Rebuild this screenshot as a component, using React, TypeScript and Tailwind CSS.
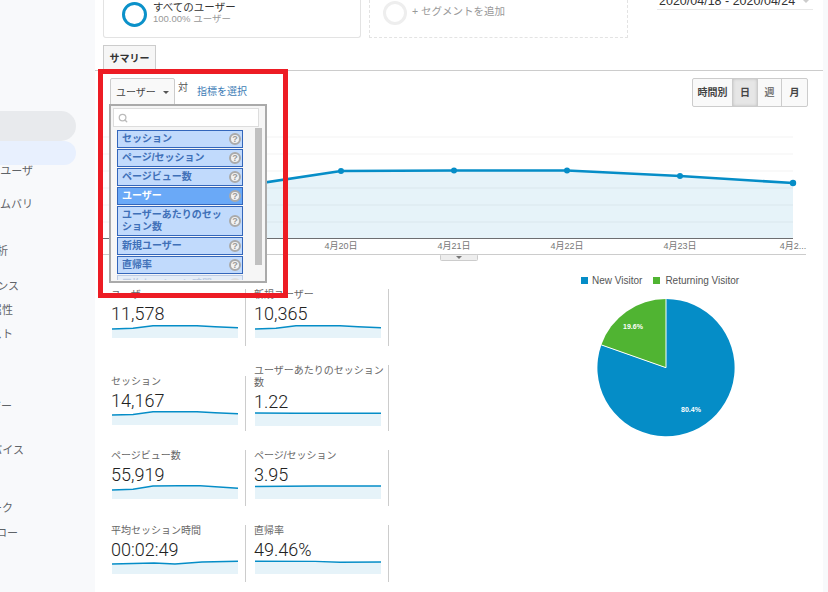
import { Search } from 'lucide-react';

const JP = "font-['Liberation_Sans','Noto_Sans_CJK_JP',sans-serif]";

const NAV = [
  { label: 'アクティブ ユーザ', cls: '-mt-px w-[33px]' },
  { label: 'ライフタイムバリ', cls: 'mt-[19px] w-[33px]' },
  { label: 'コホート分析', cls: 'mt-[33px] w-[8px]' },
  { label: 'オーディエンス', cls: 'mt-[21px] w-[19px]' },
  { label: 'ユーザー属性', cls: 'mt-[10px] w-[13px]' },
  { label: 'インタレスト', cls: 'mt-[10px] w-[13px]' },
  { label: 'テクノロジー', cls: 'mt-[58px] w-[12px]' },
  { label: 'モバイル デバイス', cls: 'mt-[30px] w-[24px]' },
  { label: 'ベンチマーク', cls: 'mt-[44px] w-[13px]' },
  { label: 'ユーザー フロー', cls: 'mt-[11px] w-[18px]' },
];

const METRIC_OPTIONS = [
  { label: 'セッション', cls: 'h-[18px]' },
  { label: 'ページ/セッション', cls: 'h-[18px]' },
  { label: 'ページビュー数', cls: 'h-[18px]' },
  { label: 'ユーザー', cls: 'h-[18px]', active: true },
  { label: 'ユーザーあたりのセッション数', cls: 'h-[30px]' },
  { label: '新規ユーザー', cls: 'h-[18px]' },
  { label: '直帰率', cls: 'h-[18px]' },
  { label: '平均セッション時間', cls: 'h-[18px] opacity-30' },
];

const METRICS = [
  { label: 'ユーザー', value: '11,578', cls: 'h-[57px]', pts: '0,5 21,4.3 41,1.7 85,1.7 103,2.7 126,3.7' },
  { label: '新規ユーザー', value: '10,365', cls: 'h-[57px]', pts: '0,5 21,4.3 41,1.7 85,1.7 103,2.7 126,3.7' },
  { label: 'セッション', value: '14,167', cls: 'h-[55px]', pts: '0,4 21,3.5 41,0.8 85,0.8 103,1.8 126,2.8' },
  { label: 'ユーザーあたりのセッション数', value: '1.22', cls: 'h-[66px]', pts: '0,1 40,1.3 126,1.2' },
  { label: 'ページビュー数', value: '55,919', cls: 'h-[56px]', pts: '0,5 21,4.3 41,1 85,0.5 126,3.3' },
  { label: 'ページ/セッション', value: '3.95', cls: 'h-[56px]', pts: '0,1.5 60,1 126,1' },
  { label: '平均セッション時間', value: '00:02:49', cls: 'h-[57px]', pts: '0,4 42,3 63,4 90,2 126,1.3' },
  { label: '直帰率', value: '49.46%', cls: 'h-[57px]', pts: '0,1.3 60,1.4 85,2.2 126,2' },
];

function Sparkline({ pts }: { pts: string }) {
  return (
    <svg width="127" height="14" viewBox="0 0 127 14" className="block ml-px">
      <polygon points={`0,14 ${pts} 126,14`} fill="#e6f3f9" />
      <polyline points={pts} fill="none" stroke="#058dc7" strokeWidth="1.4" />
    </svg>
  );
}

function MainChart() {
  const line = '115,196 228,188 341,171 454,170.5 567,170.5 680,176 793,183';
  const labels = [
    { x: 341, t: '4月20日' },
    { x: 454, t: '4月21日' },
    { x: 567, t: '4月22日' },
    { x: 680, t: '4月23日' },
    { x: 793, t: '4月2...' },
  ];
  return (
    <svg width="728" height="142" viewBox="95 120 728 142" className="block mt-[13px]">
      {[137, 154, 171, 188, 205, 222].map((y) => (
        <line key={y} x1="103" x2="793" y1={y} y2={y} stroke="#f3f3f3" />
      ))}
      <polygon points={`115,238 ${line} 793,238`} fill="#058dc7" fillOpacity="0.1" />
      <polyline points={line} fill="none" stroke="#058dc7" strokeWidth="2.6" />
      {[341, 454, 567, 680].map((x, i) => (
        <circle key={x} cx={x} cy={[171, 170.5, 170.5, 176][i]} r="3" fill="#058dc7" />
      ))}
      <circle cx="793" cy="183" r="3.2" fill="#058dc7" />
      <line x1="103" x2="793" y1="238.5" y2="238.5" stroke="#6d6e71" />
      {labels.map((l) => (
        <text key={l.x} x={l.x} y="248.5" textAnchor="middle" fontSize="9" fill="#777" fontFamily="Liberation Sans, Noto Sans CJK JP, sans-serif">
          {l.t}
        </text>
      ))}
      <line x1="103" x2="806" y1="254.5" y2="254.5" stroke="#ccc" />
      <rect x="440.5" y="254.5" width="37" height="6" rx="1" fill="#eee" stroke="#ccc" />
      <polygon points="456,256 462,256 459,259" fill="#777" />
    </svg>
  );
}

function PieChart() {
  return (
    <svg width="140" height="140" viewBox="596 298 140 140" className="block">
      <path d="M666 367.7 L666 299.1 A68.6 68.6 0 1 1 601.3 344.9 Z" fill="#058dc7" />
      <path d="M666 367.7 L601.3 344.9 A68.6 68.6 0 0 1 666 299.1 Z" fill="#50b432" />
      <path d="M601.3 344.9 L666 367.7 L666 299.1" fill="none" stroke="#fff" strokeWidth="1" />
      <text x="633" y="328.5" textAnchor="middle" fontSize="7" fontWeight="700" fill="#fff" fontFamily="Liberation Sans, sans-serif">19.6%</text>
      <text x="691" y="412" textAnchor="middle" fontSize="7" fontWeight="700" fill="#fff" fontFamily="Liberation Sans, sans-serif">80.4%</text>
    </svg>
  );
}

function HelpIcon() {
  return (
    <span className="flex items-center justify-center w-[12px] h-[12px] shrink-0 rounded-full bg-[#f2f2f2] border-2 border-[#aaa] text-[9px] leading-none font-bold text-[#999]">
      ?
    </span>
  );
}

export default function App() {
  return (
    <div className={`flex w-[828px] h-[592px] overflow-hidden bg-white text-[#333] ${JP}`}>
      {/* sidebar, cropped on the left */}
      <aside className="w-[95px] shrink-0 bg-[#f8f9fb] pt-[111px]">
        <div className="w-[76px] h-[30px] bg-[#e8eaed] rounded-r-[15px]" />
        <div className="w-[76px] h-[24px] bg-[#e8f0fe] rounded-r-[12px]" />
        {NAV.map((n) => (
          <div key={n.label} className={`flex justify-end overflow-hidden h-[14px] items-center text-[11px] text-[#5f6368] ${n.cls}`}>
            <span className="shrink-0 whitespace-nowrap">{n.label}</span>
          </div>
        ))}
      </aside>

      <main className="relative w-[728px] shrink-0">
        {/* segments + date */}
        <div className="flex h-[38px] pl-2 overflow-hidden">
          <div className="flex items-start gap-[6px] w-[258px] h-[38px] pt-[1px] pl-[18px] border-x border-b border-[#e3e3e3] rounded-b-[3px]">
            <span className="mt-[1px] w-[25px] h-[25px] rounded-full border-[3.5px] border-[#0b91c9]" />
            <div>
              <div className="text-[10.5px] leading-[12px] text-[#333]">すべてのユーザー</div>
              <div className="text-[9.5px] leading-[12px] text-[#999]">100.00% ユーザー</div>
            </div>
          </div>
          <div className="flex items-start gap-[5px] ml-2 w-[259px] h-[38px] pl-[13px] border-r border-b border-l border-dashed border-[#e3e3e3]">
            <span className="mt-[1px] w-[24px] h-[24px] rounded-full border-[3px] border-[#eeeeee]" />
            <span className="text-[10.5px] leading-[22px] text-[#999]">+ セグメントを追加</span>
          </div>
          <div className="ml-[29px] w-[156px] h-[10px] border-b border-[#e8e8e8] flex justify-between items-start">
            <span className="-mt-[6px] ml-[2px] text-[12.5px] leading-[14px] text-[#333] whitespace-nowrap">2020/04/18 - 2020/04/24</span>
            <span className="mr-[4px] w-0 h-0 border-x-[3px] border-x-transparent border-t-[3px] border-t-[#ccc]" />
          </div>
        </div>

        {/* tab */}
        <div className="mt-[7px] h-[26px] pl-2 border-b border-[#ccc]">
          <div className="flex items-center justify-center w-[53px] h-[26px] bg-[#f6f6f6] border border-b-0 border-[#ccc] text-[10px] font-bold text-[#333]">
            サマリー
          </div>
        </div>

        {/* chart controls */}
        <div className="flex justify-between items-start h-[29px] mt-[7px] pl-[15px] pr-[15px]">
          <div className="flex items-start">
            <div className="flex items-center justify-between w-[65px] h-[27px] pt-px px-[5px] bg-[#f9f9f9] border border-[#ccc] rounded-t-[2px] text-[10px] text-[#444]">
              <span>ユーザー</span>
              <span className="w-0 h-0 border-x-[3px] border-x-transparent border-t-[3px] border-t-[#555]" />
            </div>
            <span className="ml-[3px] mt-[4px] text-[10px] leading-[12px] text-[#555]">対</span>
            <span className="ml-[9px] mt-[8px] text-[10px] leading-[12px] text-[#3d7cb5]">指標を選択</span>
          </div>
          <div className="flex w-[116px] h-[29px] border border-[#ccc] rounded-[2px] text-[10px] font-bold text-[#444] bg-[#f9f9f9]">
            <span className="flex items-center justify-center w-[40px] border-r border-[#ccc]">時間別</span>
            <span className="flex items-center justify-center w-[25px] border-r border-[#ccc] bg-[#e6e6e6] shadow-[inset_0_0_3px_#bbb]">日</span>
            <span className="flex items-center justify-center w-[24px] border-r border-[#ccc] text-[#777]">週</span>
            <span className="flex items-center justify-center flex-1">月</span>
          </div>
        </div>

        <MainChart />

        {/* metrics and pie */}
        <div className="flex">
          <div className="ml-2 mt-[27px] grid grid-cols-[143px_143px] gap-y-[19px] items-end">
            {METRICS.map((m) => (
              <div key={m.label} className={`pl-2 pr-1 border-r border-[#ccc] ${m.cls}`}>
                <div className="text-[10px] leading-[12px] text-[#666]">{m.label}</div>
                <div className="font-['Roboto',sans-serif] font-light text-[18px] leading-[21px] mt-[2px] text-[#222]">{m.value}</div>
                <Sparkline pts={m.pts} />
              </div>
            ))}
          </div>
          <div className="ml-[192px] flex flex-col">
            <div className="flex items-center h-[12px] mt-[12px] text-[10px] text-[#555]">
              <span className="w-[7px] h-[7px] bg-[#058dc7]" />
              <span className="ml-[4px]">New Visitor</span>
              <span className="ml-[11px] w-[7px] h-[7px] bg-[#50b432]" />
              <span className="ml-[5px]">Returning Visitor</span>
            </div>
            <div className="mt-[12px] ml-[15px]">
              <PieChart />
            </div>
          </div>
        </div>

        {/* open metric picker, over the chart */}
        <div className="absolute left-[14px] top-[104px] w-[158px] h-[179px] overflow-hidden bg-[#f6f6f6] border-2 border-[#aaa]">
          <div className="flex items-center ml-[2px] mt-[2px] w-[146px] h-[19px] bg-white border border-[#ddd] pl-[4px]">
            <Search size={10} className="text-[#bbb]" strokeWidth={3} />
          </div>
          <div className="flex flex-col gap-px ml-[6px] w-[126px] mt-[3px] h-[150px] overflow-hidden">
            {METRIC_OPTIONS.map((o) => (
              <div
                key={o.label}
                className={`flex items-center justify-between shrink-0 gap-1 pl-[4px] pr-[1px] border border-[#3366bb] text-[10px] leading-[12px] font-bold ${o.cls} ${
                  o.active ? 'bg-[#6aa9f7] text-white' : 'bg-[#c1dafc] text-[#3f70b8]'
                }`}
              >
                <span>{o.label}</span>
                <HelpIcon />
              </div>
            ))}
          </div>
          <div className="absolute left-[144px] top-[22px] w-[7px] h-[137px] bg-[#c0c0c0]" />
        </div>

        {/* red annotation */}
        <div className="absolute left-[3px] top-[69px] w-[190px] h-[229px] border-[5px] border-[#ed1c24] pointer-events-none" />
      </main>

      <div className="flex-1 bg-[#f8f9fb]" />
    </div>
  );
}
